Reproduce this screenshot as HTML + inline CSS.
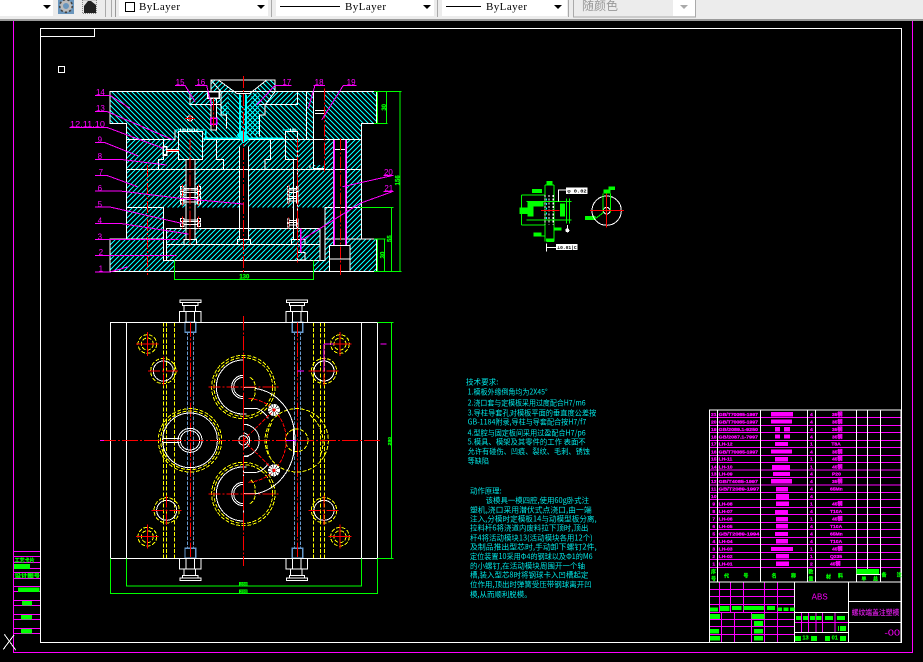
<!DOCTYPE html>
<html><head><meta charset="utf-8"><style>
html,body{margin:0;padding:0;background:#000;width:923px;height:662px;overflow:hidden}
svg{display:block}
.ui{font-family:"Liberation Serif","Noto Serif CJK SC",serif;font-size:11px;fill:#000}
.m{fill:#f0f;font:24px "Liberation Sans",sans-serif}
.t{fill:#f0f;stroke:#f0f;stroke-width:.9;font:bold 15px "Liberation Sans","Noto Sans CJK SC",sans-serif}
.c{fill:#0ff;font:23px "Noto Sans CJK SC","Liberation Sans",sans-serif;opacity:.9}
.g{fill:#0f0;stroke:#0f0;stroke-width:.7;font:bold 15px "Liberation Sans","Noto Sans CJK SC",sans-serif}
.W{fill:none;stroke:#fff;stroke-width:3}
.R{fill:none;stroke:#f00;stroke-width:3;stroke-dasharray:36 6 6 6}
.M{fill:none;stroke:#f0f;stroke-width:3}
.G{fill:none;stroke:#0f0;stroke-width:3}
.Y{fill:none;stroke:#ff0;stroke-width:3;stroke-dasharray:12 5}
.B{fill:none;stroke:#69c;stroke-width:3;stroke-dasharray:10 5}
</style></head><body>
<svg width="923" height="662" viewBox="0 0 923 662" xmlns="http://www.w3.org/2000/svg">
<defs>
<pattern id="a" width="15" height="15" patternUnits="userSpaceOnUse"><path shape-rendering="crispEdges" d="M-3 -3L18 18M-3 12L3 18M12 -3L18 3" stroke="#0ff" stroke-width="2.4" fill="none"/></pattern>
<pattern id="b" width="15" height="15" patternUnits="userSpaceOnUse"><path shape-rendering="crispEdges" d="M18 -3L-3 18M18 12L12 18M3 -3L-3 3" stroke="#0ff" stroke-width="2.4" fill="none"/></pattern>
<g id="nut"><path class="W" d="M240 30h63v8h-63zM248 38h46v8h-46zM252 46h34v19h-34zM238 65h65v32h-65zM258 65v32M283 65v32"/></g>
<g id="bolt"><circle class="Y" r="28" stroke-dasharray="9 7"/><circle class="Y" r="18" stroke-dasharray="8 5"/><path d="M-34 0H34M0 -36V36" stroke="#f00" stroke-width="3"/></g>
<g id="pin"><circle class="W" r="30"/><circle class="Y" r="38" stroke-dasharray="10 7"/><path d="M-46 0H46M0 -44V44" class="R" stroke-dasharray="28 5 5 5"/></g>
<g id="gear">
<circle class="Y" cx="430" cy="291" r="95" stroke-dasharray="12 8" stroke-width="4"/>
<circle class="Y" cx="430" cy="291" r="88" stroke-dasharray="8 14"/>
<path class="W" d="M430 210A80 80 0 0 0 430 372M430 256A35 35 0 0 0 430 326M430 262A29 29 0 0 0 430 320M430 210V252M430 330V372M415 372H440M430 292H465M430 355H470"/>
<path class="R" d="M325 291H540M430 200V380" stroke-dasharray="26 6 6 6"/>
<path class="Y" d="M450 262A35 35 0 0 1 465 300A35 35 0 0 1 450 335"/>
</g>
<g id="spring"><path class="W" d="M0 0h10v10H0zM0 14h10v10H0zM50 0h10v10H50zM50 14h10v10H50zM10 5H50M10 10H50M10 18H50"/><path d="M5 -6V30M54 -6V30" stroke="#f00" stroke-width="3" stroke-dasharray="8 3"/></g>
</defs>
<rect width="923" height="662" fill="#000"/>

<!-- toolbar -->
<rect width="923" height="19" fill="#ececec"/>
<rect y="19" width="923" height="2" fill="#9a9a9a"/>
<rect width="53" height="16" fill="#fff"/>
<path d="M43 5h8l-4 4z" fill="#000"/>
<rect x="58" y="0" width="16" height="14" fill="#6a96bd"/>
<circle cx="66" cy="6" r="4.5" fill="none" stroke="#bbb" stroke-width="3"/>
<circle cx="66" cy="6" r="6.3" fill="none" stroke="#444" stroke-width="1.6" stroke-dasharray="2.2 2.2"/>
<circle cx="66" cy="6" r="2" fill="#6a96bd"/>
<rect x="82.5" y="0" width="14" height="13.5" fill="#e6e6e6" stroke="#888" stroke-dasharray="1 1"/>
<path d="M84 6l4-5h3l5 4v8H84z" fill="#222"/>
<rect x="105" y="0" width="1" height="17" fill="#aaa"/><rect x="111" y="0" width="1" height="17" fill="#aaa"/><rect x="115" y="0" width="1" height="17" fill="#999"/>
<rect x="119" y="0" width="149" height="16" fill="#fff"/>
<rect x="125.5" y="2.5" width="9" height="9" fill="#fff" stroke="#000"/>
<text class="ui" x="139" y="10" textLength="41" lengthAdjust="spacing">ByLayer</text>
<path d="M257 5h8l-4 4z" fill="#000"/>
<rect x="271" y="0" width="1" height="17" fill="#aaa"/>
<rect x="276" y="0" width="158" height="16" fill="#fff"/>
<path d="M280 6.5H340" stroke="#000"/>
<text class="ui" x="345" y="10" textLength="41" lengthAdjust="spacing">ByLayer</text>
<path d="M423 5h8l-4 4z" fill="#000"/>
<rect x="437" y="0" width="1" height="17" fill="#aaa"/>
<rect x="442" y="0" width="125" height="16" fill="#fff"/>
<path d="M446 6.5H481" stroke="#000"/>
<text class="ui" x="486" y="10" textLength="41" lengthAdjust="spacing">ByLayer</text>
<path d="M554 5h8l-4 4z" fill="#000"/>
<rect x="568" y="0" width="1" height="17" fill="#aaa"/>
<rect x="573.5" y="-1" width="122" height="18" fill="#ececec" stroke="#aaa"/>
<rect x="673" y="0" width="22" height="16" fill="#fff"/>
<path d="M680 5h8l-4 4z" fill="#aaa"/>
<text x="582" y="10" fill="#999" font-size="12" font-family="'Noto Sans CJK SC',sans-serif">随颜色</text>

<g shape-rendering="crispEdges">
<!-- frames -->
<path d="M13.5 21V652.5H912.5V21" fill="none" stroke="#f0f"/>
<path d="M40.5 642.5V28.5H901.5V642.5Z" fill="none" stroke="#fff"/>
<path d="M40.5 36.5H94.5V28.5" fill="none" stroke="#fff"/>
<rect x="58.5" y="66.5" width="6" height="6" fill="none" stroke="#fff"/>

<!-- left strip -->
<g transform="scale(.33333) translate(0,1620)">
<path class="M" d="M42 35H120M42 50H120M42 68H120M42 85H120M42 97H120M42 115H120M42 140H120M42 155H120M42 182H120M42 197H120M42 224H120M42 239H120M42 266H120M42 281H120"/>
<g fill="#0f0"><rect x="42" y="72" width="48" height="15"/><rect x="54" y="142" width="64" height="14"/><rect x="66" y="183" width="30" height="14"/><rect x="63" y="225" width="33" height="14"/><rect x="63" y="267" width="33" height="14"/></g>
<text class="g" x="44" y="66" textLength="60" lengthAdjust="spacingAndGlyphs">工艺卡片</text>
<text class="g" x="44" y="113" textLength="76" lengthAdjust="spacingAndGlyphs">设计图号</text>
<path class="W" d="M13 283L47 330M10 328L42 285"/>
</g>

<!-- section view -->
<g transform="translate(60,70) scale(.33333)">
<path fill="url(#a)" d="M150 65H950V160H905V208H200V160H150Z"/>
<rect x="200" y="208" width="705" height="90" fill="url(#b)"/>
<rect x="200" y="298" width="705" height="115" fill="url(#b)"/>
<rect x="200" y="413" width="110" height="94" fill="url(#b)"/>
<rect x="795" y="413" width="110" height="94" fill="url(#b)"/>
<rect x="150" y="507" width="800" height="97" fill="url(#b)"/>
<rect x="310" y="413" width="485" height="159" fill="#000"/>
<rect x="320" y="475" width="460" height="48" fill="url(#b)"/>
<rect x="320" y="523" width="460" height="49" fill="url(#b)"/>
<rect x="343" y="572" width="417" height="56" fill="#000"/>
<!-- bores -->
<rect x="760" y="65" width="35" height="220" fill="#000"/>
<rect x="820" y="208" width="40" height="320" fill="#000"/>
<rect x="808" y="527" width="62" height="77" fill="#000"/>
<rect x="378" y="268" width="27" height="240" fill="#000"/>
<rect x="538" y="230" width="28" height="280" fill="#000"/>
<rect x="700" y="268" width="12" height="240" fill="#000"/>
<rect x="452" y="85" width="18" height="95" fill="#000"/>
<rect x="355" y="185" width="73" height="83" fill="#000"/><rect x="355" y="185" width="73" height="83" fill="url(#a)"/>
<rect x="676" y="185" width="36" height="83" fill="#000"/><rect x="676" y="185" width="36" height="83" fill="url(#a)"/>
<rect x="390" y="65" width="113" height="38" fill="#000"/><rect x="390" y="65" width="113" height="38" fill="url(#b)"/>
<rect x="598" y="65" width="115" height="38" fill="#000"/><rect x="598" y="65" width="115" height="38" fill="url(#b)"/>
<path d="M453 30H645V65L612 105H483L453 65Z" fill="#000"/>
<path d="M453 30H475L530 70H505V135H483V105L453 65Z" fill="url(#b)"/>
<path d="M620 30H645V65L615 105V135H575V70Z" fill="url(#a)"/>
<path d="M503 70H545V195H503Z" fill="url(#a)"/><path d="M555 70H598V195H555Z" fill="url(#b)"/>
<!-- white outlines -->
<path class="W" d="M150 65H950V160H905V507H950V604H150V507H200V160H150ZM200 208H345V180M430 208H905M200 298H295V268H310V208M200 413H310V572H795V413H905M200 298H905M310 413V413M320 475H780V572H320ZM320 523H780M200 507H310M795 507H905M343 572V628M760 572V628"/>
<path class="W" d="M453 65V30H645V65M453 30L483 65L483 135H500V175M475 30L530 70H570L620 30M645 65L615 105V135H598V200M390 65V103H483M598 103H713V65M355 185H428V268H355ZM676 185H712V268H676ZM378 268V508M405 268V508M538 230V508M566 230V508M700 268V508M712 268V508M470 208H632V268H615V298M470 208V268H490V298M760 65V295H795M750 285V295M765 122H795M765 130H795M740 65V208M820 208V527M860 208V527M820 238H860M808 527H870V567H808ZM808 567V604M870 567V604M372 508H410V523H372ZM532 508H572V523H532ZM694 508H735V523H694ZM712 548H735V570H712Z"/>
<path d="M443 65H478V85H443Z" fill="#000" stroke="#fff" stroke-width="5"/>
<path class="W" d="M453 85V180H470V85"/>
<rect x="310" y="230" width="10" height="25" fill="none" stroke="#fff" stroke-width="5"/>
<path d="M320 238H357M320 245H357" stroke="#fff" stroke-width="3"/>
<path d="M320 241H357" stroke="#f00" stroke-width="3"/>
<circle cx="390" cy="145" r="8" class="W"/>
<path d="M375 145H405" stroke="#f00" stroke-width="3"/>
<path d="M345 180H437V208M668 180H712" fill="none" stroke="#0ff" stroke-width="4"/>
<path d="M432 205H670" stroke="#0ff" stroke-width="5"/>
<path d="M540 75V190M558 75V190" stroke="#0ff" stroke-width="6"/>
<path d="M530 195L550 180L570 205L550 220Z" fill="#0ff"/>
<path d="M360 180H415M690 180H708" stroke="#fff" stroke-width="8" stroke-dasharray="3 4"/>
<!-- pillar magenta -->
<path d="M823 210V525M857 210V525" stroke="#f0f" stroke-width="4"/>
<rect x="452" y="145" width="18" height="18" fill="none" stroke="#f0f" stroke-width="4"/>
<path d="M722 475V548" stroke="#f0f" stroke-width="4"/>
<!-- springs -->
<use href="#spring" x="362" y="350"/><use href="#spring" x="362" y="378"/><use href="#spring" x="362" y="445"/>
<use href="#spring" transform="translate(682,350) scale(.55,1)"/><use href="#spring" transform="translate(682,375) scale(.55,1)"/><use href="#spring" transform="translate(682,447) scale(.55,1)"/>
<!-- centre lines -->
<path class="R" d="M262 285V615M550 18V612M793 55V305M841 205V615M390 205V530M712 205V578M460 85V170" stroke-dasharray="40 5 6 5"/>
<path d="M380 145H400M390 135V155" stroke="#f00" stroke-width="3"/>
<!-- leaders -->
<path class="M" d="M105 76H150L210 115M105 124H140L340 210M28 172H140L310 235M105 218H135L235 258M105 268H180L320 285M105 316H140L232 350M105 363H180L360 385L550 402M105 411H150L365 460M105 460H180L385 492M105 509H355M105 556H350M105 606H150L205 590M970 316H1000L848 350M970 364H1000L900 400L725 510M345 46H375L405 95M405 46H440L455 110M665 46H695H645L590 105M760 46H795H765L745 115M860 46H890H850L785 150"/>
<g class="m">
<text x="108" y="75">14</text><text x="108" y="123">13</text><text x="30" y="171" textLength="105" lengthAdjust="spacingAndGlyphs">12,11,10</text><text x="113" y="217">9</text><text x="113" y="267">8</text><text x="116" y="315">7</text><text x="113" y="363">6</text><text x="113" y="411">5</text><text x="113" y="460">4</text><text x="113" y="508">3</text><text x="116" y="555">2</text><text x="116" y="604">1</text>
<text x="347" y="45">15</text><text x="409" y="45">16</text><text x="667" y="45">17</text><text x="764" y="45">18</text><text x="860" y="45">19</text><text x="972" y="315">20</text><text x="973" y="363">21</text>
</g>
<!-- dims -->
<path class="G" d="M942 65H1025M942 160H982M980 65V160M1020 65V604M900 413H1000M995 413V604M942 507H976M973 507V604M942 604H1025M343 572V628H760V572M952 65V160M952 507V604"/>
<g class="g"><text transform="translate(978,122) rotate(-90)" font-size="18">30</text><text transform="translate(1018,346) rotate(-90)" font-size="18">156</text><text transform="translate(994,516) rotate(-90)" font-size="18">55</text><text transform="translate(973,565) rotate(-90)" font-size="18">30</text><text x="538" y="625" font-size="18">130</text></g>
</g>

<!-- plan view -->
<g transform="translate(100,290) scale(.33333)">
<path class="Y" d="M190 97V805M199 97V805M223 97V805M640 97V805M661 97V805M673 97V805" stroke-dasharray="15 5"/>
<path class="B" d="M263 125V775M281 125V775M583 125V775M602 125V775"/>
<g fill="none" stroke="#69c" stroke-width="4"><rect x="255" y="97" width="32" height="30"/><rect x="577" y="97" width="31" height="30"/><rect x="255" y="775" width="32" height="30"/><rect x="577" y="775" width="31" height="30"/></g>
<path class="W" d="M31 97H832V805H31ZM79 97V805M784 97V805"/>
<use href="#nut"/><use href="#nut" x="320"/>
<use href="#nut" transform="translate(0,902) scale(1,-1)"/><use href="#nut" transform="translate(320,902) scale(1,-1)"/>
<path d="M271 97V805M592 97V805" stroke="#f00" stroke-width="3" stroke-dasharray="44 5 6 5"/>
<use href="#bolt" x="142" y="162"/><use href="#bolt" x="720" y="162"/><use href="#bolt" x="142" y="740"/><use href="#bolt" x="720" y="740"/>
<use href="#pin" x="190" y="243"/><use href="#pin" x="672" y="243"/><use href="#pin" x="200" y="661"/><use href="#pin" x="672" y="661"/>
<use href="#gear"/><use href="#gear" transform="translate(0,903) scale(1,-1)"/>
<circle class="Y" cx="270" cy="451" r="95" stroke-width="4" stroke-dasharray="12 8"/>
<circle class="Y" cx="270" cy="451" r="88" stroke-dasharray="8 14"/>
<circle class="W" cx="270" cy="451" r="82"/><circle class="W" cx="270" cy="451" r="36"/><circle class="W" cx="270" cy="451" r="29"/>
<path class="W" d="M190 445H238M190 458H238"/>
<circle class="Y" cx="590" cy="451" r="95" stroke-width="4" stroke-dasharray="12 9"/>
<circle class="Y" cx="590" cy="451" r="34" stroke-dasharray="10 6"/>
<path class="Y" d="M630 375C665 405 680 450 660 500M515 400C495 430 495 480 515 510"/>
<path class="W" d="M465 295C530 305 585 360 585 451C585 540 530 600 465 612M430 403A48 48 0 0 1 430 499M430 428A24 24 0 0 1 430 475M430 403H445M430 499H445M470 355C495 365 502 380 505 385M470 547C495 540 502 525 505 520M580 415V490"/>
<circle class="W" cx="430" cy="451" r="14"/>
<path fill="none" stroke="#f00" stroke-width="3" stroke-dasharray="12 4" d="M430 451L522 360M430 451L522 541M522 360A130 130 0 0 1 522 541M445 325C480 328 505 342 522 360M445 577C480 574 505 560 522 541"/>
<circle cx="522" cy="360" r="11" fill="#000" stroke="#fff" stroke-width="14" stroke-dasharray="5 1.5"/><circle cx="522" cy="541" r="11" fill="#000" stroke="#fff" stroke-width="14" stroke-dasharray="5 1.5"/>
<circle cx="522" cy="360" r="5" fill="#f00"/><circle cx="522" cy="541" r="5" fill="#f00"/>
<path d="M0 451H845" stroke="#f00" stroke-width="3" stroke-dasharray="48 6 6 6"/>
<path d="M430 78V828" stroke="#f00" stroke-width="3" stroke-dasharray="44 5 6 5"/>
<path d="M0 451H12M672 162V245M672 162H700M842 162H860M592 243H612M558 451H590" stroke="#f0f" stroke-width="3"/>
<path class="G" d="M832 97H880M875 97V805M832 805H880M31 805V912M832 805V912M31 910H832M79 805V890M784 805V890M79 888H784"/>
<g fill="#0f0"><rect x="417" y="876" width="26" height="12"/><rect x="417" y="898" width="26" height="12"/></g>
<text class="g" transform="translate(873,466) rotate(-90)" font-size="17">280</text>
<text x="420" y="887" font-size="13" font-weight="bold" font-family="'Liberation Sans',sans-serif" fill="#060">280</text>
<text x="420" y="909" font-size="13" font-weight="bold" font-family="'Liberation Sans',sans-serif" fill="#060">290</text>
</g>
</g>

<!-- technical text -->
<g transform="translate(455,370) scale(.33333)" class="c">
<text x="33" y="44" textLength="97" lengthAdjust="spacingAndGlyphs">技术要求:</text>
<text x="38" y="74" textLength="240" lengthAdjust="spacingAndGlyphs">1.模板外缘倒角均为2X45°</text>
<text x="38" y="106" textLength="354" lengthAdjust="spacingAndGlyphs">2.浇口套与定模板采用过度配合H7/m6</text>
<text x="38" y="136" textLength="386" lengthAdjust="spacingAndGlyphs">3.导柱导套孔对模板平面的垂直度公差按</text>
<text x="38" y="164" textLength="356" lengthAdjust="spacingAndGlyphs">GB-1184附录,导柱与导套配合按H7/f7</text>
<text x="38" y="196" textLength="354" lengthAdjust="spacingAndGlyphs">4.型腔与固定板间采用过盈配合H7/p6</text>
<text x="38" y="224" textLength="354" lengthAdjust="spacingAndGlyphs">5.模具、模架及其零件的工作 表面不</text>
<text x="38" y="252" textLength="367" lengthAdjust="spacingAndGlyphs">允许有碰伤、凹痕、裂纹、毛刺、锈蚀</text>
<text x="38" y="281" textLength="64" lengthAdjust="spacingAndGlyphs">等缺陷</text>
<text x="45" y="371" textLength="95" lengthAdjust="spacingAndGlyphs">动作原理:</text>
<text x="92" y="399" textLength="310" lengthAdjust="spacingAndGlyphs">该模具一模四腔,使用60g卧式注</text>
<text x="45" y="427" textLength="365" lengthAdjust="spacingAndGlyphs">塑机,浇口采用潜伏式点浇口,由一端</text>
<text x="45" y="454" textLength="380" lengthAdjust="spacingAndGlyphs">注入,分模时定模板14与动模型板分离,</text>
<text x="45" y="482" textLength="355" lengthAdjust="spacingAndGlyphs">拉料杆6将浇道内废料拉下顶时,顶出</text>
<text x="45" y="511" textLength="368" lengthAdjust="spacingAndGlyphs">杆4将活动模块13(活动模块各用12个)</text>
<text x="45" y="539" textLength="380" lengthAdjust="spacingAndGlyphs">及制品推出型芯时,手动卸下螺钉2件,</text>
<text x="45" y="567" textLength="368" lengthAdjust="spacingAndGlyphs">定位装置10采用Φ4的钢球以及Φ1的M6</text>
<text x="45" y="595" textLength="345" lengthAdjust="spacingAndGlyphs">的小螺钉,在活动模块周围开一个轴</text>
<text x="45" y="623" textLength="355" lengthAdjust="spacingAndGlyphs">槽,装入型芯8时将钢球卡入凹槽起定</text>
<text x="45" y="651" textLength="365" lengthAdjust="spacingAndGlyphs">位作用,顶出时弹簧受压带钢球离开凹</text>
<text x="45" y="681" textLength="185" lengthAdjust="spacingAndGlyphs">模,从而顺利脱模。</text>
</g>

<!-- detail figures -->
<g transform="translate(500,170) scale(.33333)" shape-rendering="crispEdges">
<path class="G" d="M135 45V215M162 45V215M135 45H162M65 75V165M65 75H135M65 165H135M80 95H215M80 150H215M200 85V160M208 85V160M100 198H135M140 215H162"/>
<g fill="#0f0"><rect x="58" y="112" width="25" height="20"/><rect x="96" y="57" width="30" height="12"/><rect x="82" y="95" width="18" height="45"/><rect x="100" y="95" width="30" height="15"/><rect x="180" y="100" width="15" height="40"/><rect x="140" y="33" width="18" height="10"/><rect x="100" y="187" width="25" height="12"/><rect x="162" y="172" width="22" height="10"/><rect x="138" y="205" width="22" height="10"/><rect x="255" y="138" width="32" height="12"/><rect x="310" y="58" width="22" height="12"/><rect x="325" y="50" width="20" height="10"/></g>
<path d="M135 75V165M147 75V165M160 75V165" stroke="#fff" stroke-width="4" stroke-dasharray="6 5"/>
<path d="M140 85V150" stroke="#0ff" stroke-width="3" stroke-dasharray="6 8"/>
<path class="W" d="M175 95V60H198M140 220V245M140 232H168M202 165V175"/>
<circle cx="202" cy="181" r="6" fill="#fff"/>
<rect x="198" y="52" width="65" height="20" fill="#fff"/><rect x="168" y="222" width="65" height="18" fill="#fff"/>
<text x="202" y="68" font-size="15" font-weight="bold" font-family="'Liberation Mono',monospace" fill="#000" textLength="58" lengthAdjust="spacingAndGlyphs">φ 0.02</text>
<text x="172" y="237" font-size="14" font-weight="bold" font-family="'Liberation Mono',monospace" fill="#000" textLength="58" lengthAdjust="spacingAndGlyphs">⊥0.01|C</text>
<path d="M123 121H178" stroke="#f00" stroke-width="3"/>
<circle class="W" cx="320" cy="122" r="44"/>
<circle class="W" cx="320" cy="122" r="10"/>
<path class="G" d="M309 70V128M331 70V128M287 145L310 128"/>
<path d="M270 122H372M320 70V172" stroke="#f00" stroke-width="3"/>
</g>

<!-- BOM + title block -->
<g transform="translate(700,400) scale(.33333)" shape-rendering="crispEdges">
<path class="M" d="M28 53H603M28 76H603M28 98H603M28 121H603M28 143H603M28 166H603M28 188H603M28 210H603M28 233H603M28 255H603M28 278H603M28 299H603M28 322H603M28 344H603M28 367H603M28 389H603M28 412H603M28 434H603M28 457H603M28 479H603M28 503H603"/>
<path class="M" d="M28 568H283M28 590H283M28 613H283M28 637H283M28 658H283M28 680H283M28 703H283M58 546V637M92 546V637M131 546V637M193 546V637M232 546V637M64 637V727M103 637V727M154 637V727M194 637V727M232 637V727M283 667H445M304 637V697M325 637V697M348 637V697M367 637V697M405 637V697"/>
<path class="W" d="M28 30H603V727H28ZM52 30V546M181 30V546M322 30V546M347 30V546M469 30V546M503 30V523M541 30V546M469 523H541M28 546H603M283 546V727M445 546V727M445 604H603M445 667H603M283 637H445M283 697H445"/>
<g fill="#f0f">
<rect x="213" y="36" width="66" height="13"/><rect x="213" y="58" width="63" height="13"/><rect x="225" y="81" width="15" height="13"/><rect x="252" y="81" width="18" height="13"/><rect x="225" y="103" width="15" height="13"/><rect x="252" y="103" width="18" height="13"/><rect x="225" y="126" width="39" height="12"/><rect x="213" y="148" width="63" height="13"/><rect x="225" y="171" width="39" height="13"/><rect x="216" y="195" width="54" height="13"/><rect x="219" y="216" width="51" height="12"/><rect x="213" y="237" width="63" height="13"/><rect x="228" y="261" width="36" height="13"/><rect x="228" y="282" width="39" height="15"/><rect x="228" y="304" width="39" height="14"/><rect x="225" y="330" width="39" height="13"/><rect x="228" y="351" width="36" height="13"/><rect x="228" y="372" width="36" height="13"/><rect x="225" y="396" width="39" height="12"/><rect x="228" y="417" width="36" height="13"/><rect x="213" y="441" width="66" height="12"/><rect x="228" y="462" width="39" height="14"/><rect x="228" y="485" width="39" height="13"/>
</g>
<g class="t">
<text x="33" y="48">21</text><text x="33" y="70">20</text><text x="33" y="93">19</text><text x="33" y="115">18</text><text x="33" y="137">17</text><text x="33" y="160">16</text><text x="33" y="182">15</text><text x="33" y="205">14</text><text x="33" y="227">13</text><text x="33" y="249">12</text><text x="33" y="272">11</text><text x="33" y="294">10</text><text x="37" y="317">9</text><text x="37" y="339">8</text><text x="37" y="361">7</text><text x="37" y="384">6</text><text x="37" y="406">5</text><text x="37" y="429">4</text><text x="37" y="451">3</text><text x="37" y="474">2</text><text x="37" y="496">1</text>
<text x="56" y="48" textLength="118" lengthAdjust="spacingAndGlyphs">GB/T70085-1997</text><text x="56" y="70" textLength="118" lengthAdjust="spacingAndGlyphs">GB/T70085-1997</text><text x="56" y="93" textLength="118" lengthAdjust="spacingAndGlyphs">GB/2089.1-9250</text><text x="56" y="115" textLength="118" lengthAdjust="spacingAndGlyphs">GB/2087.1-7997</text><text x="56" y="137">LH-12</text><text x="56" y="160" textLength="118" lengthAdjust="spacingAndGlyphs">GB/T70085-1997</text><text x="56" y="182">LH-11</text><text x="56" y="205">LH-10</text><text x="56" y="227">LH-09</text><text x="56" y="249" textLength="118" lengthAdjust="spacingAndGlyphs">GB/T4085-1997</text><text x="56" y="272" textLength="122" lengthAdjust="spacingAndGlyphs">GB/T2089-1997</text><text x="56" y="317">LH-08</text><text x="56" y="339">LH-07</text><text x="56" y="361">LH-06</text><text x="56" y="384">LH-05</text><text x="56" y="406" textLength="122" lengthAdjust="spacingAndGlyphs">GB/T2089-1994</text><text x="56" y="429">LH-04</text><text x="56" y="451">LH-03</text><text x="56" y="474">LH-02</text><text x="56" y="496">LH-01</text>
<text x="330" y="48">4</text><text x="330" y="70">4</text><text x="330" y="93">4</text><text x="330" y="115">4</text><text x="330" y="137">1</text><text x="330" y="160">4</text><text x="330" y="182">1</text><text x="330" y="205">1</text><text x="330" y="227">4</text><text x="330" y="249">4</text><text x="330" y="272">4</text><text x="330" y="294">4</text><text x="330" y="317">1</text><text x="330" y="339">4</text><text x="330" y="361">1</text><text x="330" y="384">4</text><text x="330" y="406">4</text><text x="330" y="429">4</text><text x="330" y="451">1</text><text x="330" y="474">1</text><text x="330" y="496">2</text>
<text x="396" y="48">35钢</text><text x="396" y="70">35钢</text><text x="396" y="93">35钢</text><text x="396" y="115">35钢</text><text x="394" y="137">T8A</text><text x="396" y="160">35钢</text><text x="396" y="182">45钢</text><text x="396" y="205">45钢</text><text x="396" y="227">P20</text><text x="396" y="249">35钢</text><text x="390" y="272">65Mn</text><text x="396" y="317">45钢</text><text x="390" y="339">T10A</text><text x="396" y="361">45钢</text><text x="390" y="384">T10A</text><text x="390" y="406">65Mn</text><text x="390" y="429">T10A</text><text x="396" y="451">45钢</text><text x="390" y="474">Q235</text><text x="390" y="496">45钢</text>
</g>
<g fill="#0f0">
<rect x="469" y="507" width="68" height="15"/>
<rect x="30" y="622" width="24" height="12"/><rect x="60" y="618" width="28" height="15"/><rect x="96" y="618" width="28" height="12"/><rect x="130" y="618" width="62" height="12"/><rect x="201" y="618" width="24" height="12"/><rect x="232" y="622" width="14" height="11"/><rect x="250" y="622" width="16" height="11"/><rect x="270" y="622" width="14" height="11"/>
<rect x="30" y="642" width="30" height="15"/><rect x="154" y="642" width="40" height="15"/><rect x="162" y="663" width="27" height="15"/><rect x="30" y="687" width="27" height="13"/><rect x="162" y="687" width="27" height="13"/><rect x="30" y="708" width="30" height="14"/><rect x="162" y="708" width="27" height="14"/>
<rect x="288" y="648" width="15" height="12"/><rect x="309" y="648" width="15" height="12"/><rect x="330" y="648" width="15" height="12"/><rect x="348" y="648" width="17" height="12"/><rect x="375" y="648" width="24" height="12"/><rect x="411" y="648" width="24" height="12"/>
<rect x="420" y="678" width="18" height="15"/><rect x="414" y="678" width="3" height="15"/>
<rect x="285" y="708" width="18" height="15"/><rect x="333" y="708" width="18" height="15"/><rect x="375" y="708" width="15" height="15"/><rect x="420" y="708" width="18" height="15"/>
</g>
<g class="g">
<text x="33" y="520">序</text><text x="33" y="542">号</text><text x="72" y="532">代</text><text x="130" y="532">号</text><text x="215" y="532">名</text><text x="273" y="532">称</text><text x="325" y="520">数</text><text x="325" y="542">量</text><text x="378" y="535">材</text><text x="414" y="532">料</text><text x="484" y="541">单</text><text x="519" y="541">总</text><text x="545" y="530">备</text><text x="590" y="530">注</text>
<text x="307" y="718" font-size="17">13</text><text x="395" y="718" font-size="17">01</text>
</g>
<text x="335" y="598" font-size="24" font-family="'Liberation Sans',sans-serif" fill="#f0f" textLength="48" lengthAdjust="spacingAndGlyphs">ABS</text>
<text x="455" y="645" font-size="22" font-weight="bold" font-family="'Noto Sans CJK SC',sans-serif" fill="#c018c8" textLength="143" lengthAdjust="spacingAndGlyphs">螺纹端盖注塑模</text>
<text x="553" y="706" font-size="24" font-family="'Liberation Sans',sans-serif" fill="#f0f" textLength="47" lengthAdjust="spacingAndGlyphs">-00</text>
</g>
</svg>
</body></html>
